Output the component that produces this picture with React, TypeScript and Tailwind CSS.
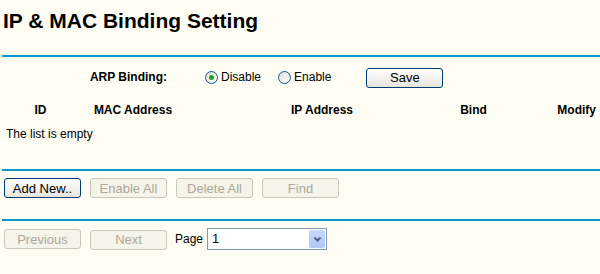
import React from 'react';

const font = { fontFamily: '"Liberation Sans", Arial, sans-serif' };

const Btn: React.FC<{ label: string; disabled?: boolean }> = ({ label, disabled }) => (
    <button
        disabled={disabled}
        className={
            disabled
                ? 'w-[77px] h-[20px] rounded-[3px] border border-[#c9c7ba] bg-[#f5f4ea] text-[13px] leading-none text-[#aca899]'
                : 'w-[77px] h-[20px] rounded-[3px] border border-[#003c74] bg-gradient-to-b from-[#ffffff] to-[#e6e5dd] text-[13px] leading-none text-black'
        }
    >
        {label}
    </button>
);

const Radio: React.FC<{ checked?: boolean; label: string }> = ({ checked, label }) => (
    <label className="flex items-center gap-[3px] text-[12px] text-black">
        <span className="w-[13px] h-[13px] rounded-full border border-[#1c5180] bg-gradient-to-br from-[#dcdcd7] to-[#ffffff] flex items-center justify-center">
            {checked && <span className="w-[5px] h-[5px] rounded-full bg-[#21a121]" />}
        </span>
        {label}
    </label>
);

const Divider = () => <div className="h-[2px] bg-[#0a98c8]" />;

export default function App() {
    return (
        <div className="min-h-screen w-[600px] bg-[#fdfdf3] text-black overflow-hidden" style={font}>
            {/* title */}
            <div className="h-[55px] pt-[9px] pl-[3px]">
                <h1 className="text-[21px] leading-[24px] font-bold">IP &amp; MAC Binding Setting</h1>
            </div>

            <div className="ml-[2px]">
                <Divider />

                {/* ARP binding row */}
                <div className="mt-[10px] h-[20px] flex items-center">
                    <div className="w-[165px] text-right text-[12px] font-bold">ARP Binding:</div>
                    <div className="ml-[38px] flex items-center">
                        <Radio checked label="Disable" />
                        <div className="ml-[17px]">
                            <Radio label="Enable" />
                        </div>
                    </div>
                    <div className="ml-[35px]">
                        <Btn label="Save" />
                    </div>
                </div>

                {/* table header */}
                <div className="mt-[13px] h-[20px] flex items-center text-[12px] font-bold whitespace-nowrap">
                    <div className="w-[77px] text-center">ID</div>
                    <div className="w-[108px] text-center">MAC Address</div>
                    <div className="w-[270px] text-center">IP Address</div>
                    <div className="w-[33px] text-center">Bind</div>
                    <div className="flex-1 text-right pr-[4px]">Modify</div>
                </div>
                <div className="mt-[4px] h-[20px] flex items-center pl-[4px] text-[12px]">The list is empty</div>

                <div className="mt-[25px]">
                    <Divider />
                </div>

                {/* actions */}
                <div className="mt-[7px] pl-[2px] flex gap-[9px]">
                    <Btn label="Add New.." />
                    <Btn label="Enable All" disabled />
                    <Btn label="Delete All" disabled />
                    <Btn label="Find" disabled />
                </div>

                <div className="mt-[21px]">
                    <Divider />
                </div>

                {/* paging */}
                <div className="mt-[6px] pl-[2px] flex items-center">
                    <Btn label="Previous" disabled />
                    <div className="ml-[9px]">
                        <Btn label="Next" disabled />
                    </div>
                    <span className="ml-[8px] text-[12px]">Page</span>
                    <div className="ml-[4px] w-[120px] h-[22px] border border-[#7f9db9] bg-white flex items-center justify-between p-[1px]">
                        <span className="pl-[3px] text-[13px]">1</span>
                        <span className="w-[16px] h-[18px] rounded-[2px] bg-gradient-to-b from-[#c9d9fc] to-[#b0c6f6] flex items-center justify-center">
                            <svg width="7" height="5" viewBox="0 0 7 5">
                                <path d="M0.5 0.5 L3.5 3.5 L6.5 0.5" stroke="#4d6185" strokeWidth="2" fill="none" />
                            </svg>
                        </span>
                    </div>
                </div>
            </div>
        </div>
    );
}
